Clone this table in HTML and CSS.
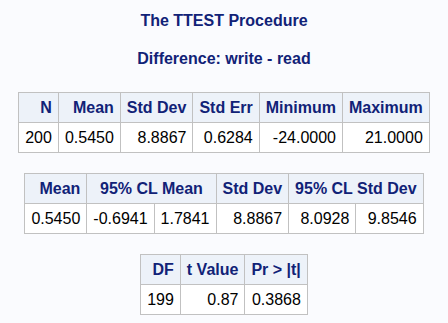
FILE: index.html
```html
<!DOCTYPE html>
<html>
<head>
<meta charset="utf-8">
<link rel="stylesheet" href="styles.css">
</head>
<body>
<div class="page">
  <h1 class="title">The TTEST Procedure</h1>
  <h2 class="title sub">Difference: write - read</h2>

  <table class="tbl">
    <thead>
      <tr><th>N</th><th>Mean</th><th>Std Dev</th><th>Std Err</th><th>Minimum</th><th>Maximum</th></tr>
    </thead>
    <tbody>
      <tr><td>200</td><td>0.5450</td><td>8.8867</td><td>0.6284</td><td>-24.0000</td><td>21.0000</td></tr>
    </tbody>
  </table>

  <table class="tbl">
    <thead>
      <tr><th>Mean</th><th colspan="2" class="c">95% CL Mean</th><th>Std Dev</th><th colspan="2" class="c">95% CL Std Dev</th></tr>
    </thead>
    <tbody>
      <tr><td>0.5450</td><td>-0.6941</td><td>1.7841</td><td>8.8867</td><td>8.0928</td><td>9.8546</td></tr>
    </tbody>
  </table>

  <table class="tbl">
    <thead>
      <tr><th>DF</th><th>t Value</th><th>Pr &gt; |t|</th></tr>
    </thead>
    <tbody>
      <tr><td>199</td><td>0.87</td><td>0.3868</td></tr>
    </tbody>
  </table>
</div>
</body>
</html>
```

FILE: styles.css
```css
html, body {
  margin: 0;
  padding: 0;
  background: #fafbfe;
}
.page {
  display: flex;
  flex-direction: column;
  align-items: center;
  padding-top: 12px;
  font-family: "Liberation Sans", Arial, sans-serif;
}
.title {
  margin: 0;
  font-size: 16px;
  font-weight: bold;
  color: #112277;
  line-height: 18px;
}
.sub {
  margin-top: 20px;
  margin-bottom: 24px;
}
.tbl {
  border-collapse: collapse;
  margin-bottom: 20px;
  font-size: 16px;
}
.tbl th, .tbl td {
  border: 1px solid #c1c1c1;
  padding: 6px 6px 5px;
  text-align: right;
  line-height: 18px;
  white-space: nowrap;
}
.tbl th {
  background: #edf2f9;
  color: #112277;
  font-weight: bold;
}
.tbl th.c {
  text-align: center;
}
.tbl td {
  background: #ffffff;
  color: #000000;
}
```
